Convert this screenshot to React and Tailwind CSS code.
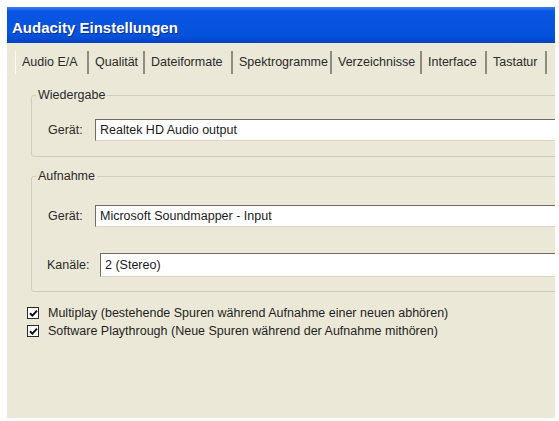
import React from "react";

const tabs = [
  { label: "Audio E/A", w: "w-[74px]", active: true },
  { label: "Qualität", w: "w-[56px]" },
  { label: "Dateiformate", w: "w-[88px]" },
  { label: "Spektrogramme", w: "w-[99px]" },
  { label: "Verzeichnisse", w: "w-[90px]" },
  { label: "Interface", w: "w-[65px]" },
  { label: "Tastatur", w: "w-[60px]" },
];

const Field = ({ value, h = "h-[22px]" }) => (
  <div
    className={`flex-1 ${h} bg-white border-t border-l border-t-[#6d6d66] border-l-[#6d6d66] border-b border-b-[#d8d6c8] flex items-center pl-[4px] text-[#1a1a1a]`}
  >
    {value}
  </div>
);

const Check = ({ label }) => (
  <div className="flex items-center h-[18px]">
    <div className="w-[12px] h-[12px] bg-white border border-[#2b2b2b] flex items-center justify-center">
      <svg width="9" height="9" viewBox="0 0 9 9">
        <path d="M1 4.2 L3.4 6.6 L8 1.6" stroke="#111" strokeWidth="2" fill="none" />
      </svg>
    </div>
    <span className="ml-[9px] text-[#1f1f1f]">{label}</span>
  </div>
);

export default function App() {
  return (
    <div className="w-[559px] h-[421px] bg-white overflow-hidden pt-[7px] pl-[7px]">
      <div
        className="w-[548px] h-[411px] bg-[#ebe8d7] overflow-hidden flex flex-col text-[12.5px]"
        style={{ fontFamily: '"Liberation Sans", Arial, sans-serif' }}
      >
        {/* title bar */}
        <div className="h-[36px] shrink-0 bg-[linear-gradient(to_bottom,#3a7ef2_0%,#0a56e2_12%,#0552dc_80%,#0344c4_100%)] flex items-center pl-[5px] pt-[6px]">
          <span className="text-white font-bold text-[15px] [text-shadow:1px_1px_0_#0a2e8a]">
            Audacity Einstellungen
          </span>
        </div>

        {/* tabs */}
        <div className="h-[35px] shrink-0 flex items-center pl-[8px] pt-[3px]">
          {tabs.map((t) => (
            <div
              key={t.label}
              className={`${t.w} h-[23px] flex items-center pl-[6px] border-r-2 border-r-[#8f8d81] text-[#2a2a2a] whitespace-nowrap ${
                t.active ? "border-l border-l-[#fbfaf4]" : ""
              }`}
            >
              {t.label}
            </div>
          ))}
        </div>

        {/* body */}
        <div className="flex flex-col pl-[24px] pt-[10px]">
          <fieldset className="w-[560px] border border-[#cfcdbd] rounded-[3px] pb-[15px]">
            <legend className="ml-[4px] px-[2px] text-[#2a2a2a] leading-[15px]">Wiedergabe</legend>
            <div className="flex items-center pt-[16px] pl-[16px]">
              <span className="w-[47px] text-[#2a2a2a]">Gerät:</span>
              <Field value="Realtek HD Audio output" />
            </div>
          </fieldset>

          <fieldset className="w-[560px] mt-[12px] border border-[#cfcdbd] rounded-[3px] pb-[14px]">
            <legend className="ml-[4px] px-[2px] text-[#2a2a2a] leading-[15px]">Aufnahme</legend>
            <div className="flex items-center pt-[21px] pl-[16px]">
              <span className="w-[47px] text-[#2a2a2a]">Gerät:</span>
              <Field value="Microsoft Soundmapper - Input" />
            </div>
            <div className="flex items-center pt-[26px] pl-[15px]">
              <span className="w-[53px] text-[#2a2a2a]">Kanäle:</span>
              <Field value="2 (Stereo)" h="h-[24px]" />
            </div>
          </fieldset>
        </div>

        <div className="flex flex-col pl-[20px] pt-[12px]">
          <Check label="Multiplay (bestehende Spuren während Aufnahme einer neuen abhören)" />
          <Check label="Software Playthrough (Neue Spuren während der Aufnahme mithören)" />
        </div>
      </div>
    </div>
  );
}
